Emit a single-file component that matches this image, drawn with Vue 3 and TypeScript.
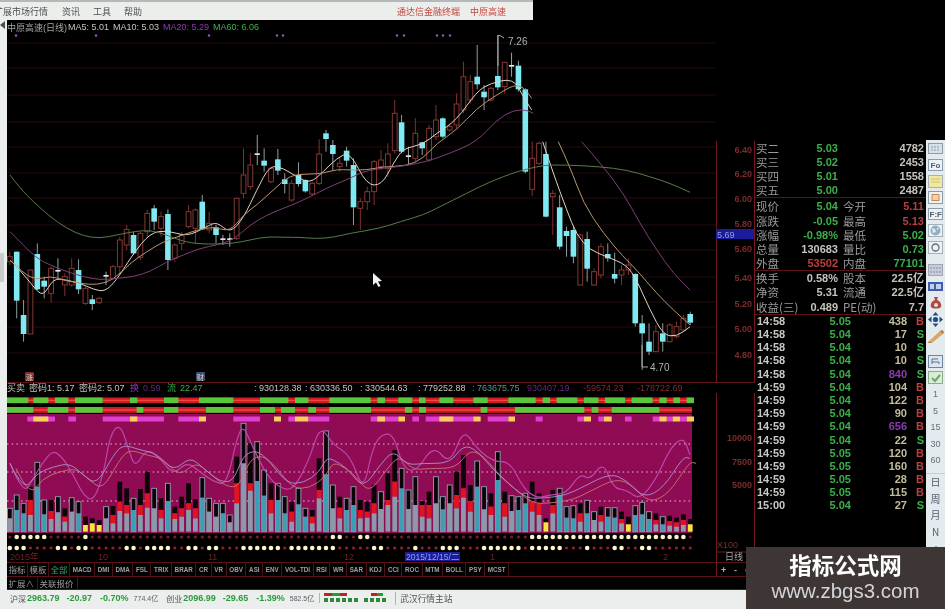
<script setup lang="ts">
type Pt = [number, number];
type Candle = [string, number, number, number, number];
type Bar = [string, number, number, number?];

const X0 = 16.7;
const STEP = 6.873;
const cx = (i: number) => X0 + STEP * i;

// values below were read off 3x crops, so they are in 1/3 px from a crop origin
const leftCandles: Candle[] = [
  ["r", 365, 380, 395, 405], ["c", 365, 365, 512, 565], ["c", 510, 555, 612, 635], ["r", 420, 420, 612, 612],
  ["c", 340, 372, 478, 480], ["c", 440, 452, 470, 505], ["r", 410, 415, 490, 518], ["w", 385, 420, 425, 445],
  ["r", 430, 440, 465, 498], ["r", 385, 415, 465, 470], ["c", 388, 420, 478, 492], ["r", 470, 475, 520, 525],
  ["c", 495, 508, 522, 540], ["r", 500, 505, 518, 522], ["w", 425, 435, 440, 465], ["r", 405, 410, 445, 450],
  ["r", 320, 330, 410, 430], ["r", 285, 298, 345, 360], ["c", 305, 315, 370, 375], ["r", 305, 310, 382, 390],
  ["r", 240, 250, 305, 320], ["c", 225, 235, 275, 300], ["r", 245, 260, 295, 320], ["c", 238, 252, 390, 420],
  ["r", 340, 345, 385, 395], ["r", 305, 315, 340, 360], ["r", 225, 245, 290, 295], ["r", 235, 240, 295, 340],
  ["c", 195, 215, 298, 300], ["r", 245, 280, 300, 310], ["c", 285, 292, 315, 340], ["w", 315, 325, 330, 345],
  ["w", 310, 325, 330, 350], ["r", 205, 205, 325, 330], ["r", 55, 135, 190, 205], ["r", 70, 105, 170, 180],
  ["w", 15, 70, 76, 105], ["c", 55, 92, 107, 125], ["r", 110, 115, 155, 160], ["c", 57, 88, 122, 135],
  ["c", 130, 148, 162, 190], ["r", 150, 160, 210, 215], ["c", 97, 135, 162, 170], ["c", 148, 150, 184, 188],
  ["r", 155, 160, 192, 195], ["r", 28, 72, 160, 165], ["c", 0, 10, 27, 65], ["c", 30, 45, 72, 120],
  ["r", 80, 100, 110, 125], ["c", 50, 62, 92, 110],
];
const rightCandles: Candle[] = [
  ["c", 385, 405, 532, 585], ["r", 505, 515, 535, 600], ["r", 470, 485, 515, 540], ["r", 390, 395, 485, 525],
  ["r", 360, 390, 410, 420], ["r", 340, 372, 415, 440], ["r", 210, 250, 362, 370], ["c", 255, 277, 365, 370],
  ["w", 350, 376, 382, 405], ["r", 265, 310, 385, 395], ["c", 335, 337, 355, 375], ["r", 285, 295, 390, 395],
  ["r", 225, 270, 320, 330], ["c", 262, 265, 320, 325], ["r", 285, 290, 300, 305], ["r", 190, 222, 285, 295],
  ["r", 95, 140, 240, 250], ["r", 135, 155, 210, 220], ["c", 45, 140, 163, 178], ["c", 165, 185, 202, 240],
  ["r", 170, 175, 210, 215], ["c", 15, 138, 172, 180], ["r", 95, 97, 170, 190], ["w", 68, 105, 108, 140],
  ["c", 92, 107, 178, 185], ["c", 175, 178, 425, 430], ["r", 335, 385, 478, 498], ["r", 335, 340, 400, 405],
  ["c", 335, 372, 560, 562], ["r", 480, 490, 500, 615], ["c", 495, 532, 650, 658], ["c", 590, 603, 618, 680],
  ["c", 590, 600, 680, 700], ["r", 610, 615, 765, 765], ["c", 605, 627, 716, 755], ["r", 715, 725, 765, 768],
  ["r", 640, 650, 735, 745], ["c", 640, 672, 685, 695], ["c", 668, 732, 746, 760], ["r", 705, 720, 735, 765],
  ["r", 685, 705, 720, 735], ["c", 730, 732, 880, 890], ["c", 855, 880, 910, 1020], ["c", 880, 935, 965, 975],
  ["r", 885, 905, 965, 965], ["c", 880, 910, 935, 965], ["r", 880, 885, 935, 938], ["r", 875, 890, 920, 925],
  ["r", 855, 865, 900, 905], ["c", 845, 852, 878, 885],
];

const candles = [
  ...leftCandles.map((c, n) => ({ type: c[0], x: cx(n - 1), h: 130 + c[1] / 3, t: 130 + c[2] / 3, b: 130 + c[3] / 3, l: 130 + c[4] / 3 })),
  ...rightCandles.map((c, n) => ({ type: c[0], x: cx(n + 49), h: 30 + c[1] / 3, t: 30 + c[2] / 3, b: 30 + c[3] / 3, l: 30 + c[4] / 3 })),
];

function smooth(pts: Pt[]): string {
  let d = `M${pts[0][0].toFixed(1)} ${pts[0][1].toFixed(1)}`;
  for (let i = 1; i < pts.length - 1; i++) {
    const mx = (pts[i][0] + pts[i + 1][0]) / 2;
    const my = (pts[i][1] + pts[i + 1][1]) / 2;
    d += `Q${pts[i][0].toFixed(1)} ${pts[i][1].toFixed(1)} ${mx.toFixed(1)} ${my.toFixed(1)}`;
  }
  const last = pts[pts.length - 1];
  return d + `L${last[0].toFixed(1)} ${last[1].toFixed(1)}`;
}

const mainL = (p: number[]): Pt => [p[0] / 3, 130 + p[1] / 3];
const mainR = (p: number[]): Pt => [350 + p[0] / 3, 30 + p[1] / 3];
const lowL = (p: number[]): Pt => [p[0] / 3, 375 + p[1] / 3];
const lowR = (p: number[]): Pt => [350 + p[0] / 3, 375 + p[1] / 3];

const maLines = [
  {
    color: "#ddd6c6",
    paths: [
      smooth([
        ...[[30, 390], [60, 420], [100, 470], [130, 500], [160, 445], [200, 450], [240, 460], [280, 478], [315, 485], [350, 450], [400, 370], [450, 310], [500, 300], [560, 320], [620, 290], [650, 275], [690, 310], [730, 265], [770, 180], [810, 105], [850, 115], [890, 140], [930, 160], [970, 125], [1010, 85], [1050, 65]].map(mainL),
        ...[[50, 465], [95, 465], [130, 400], [160, 355], [215, 345], [260, 310], [320, 270], [380, 185], [420, 160], [490, 145], [520, 200], [545, 240]].map(mainR),
      ]),
      smooth([[578, 335], [610, 430], [650, 540], [680, 615], [720, 660], [770, 680], [830, 705], [860, 750], [900, 840], [940, 915], [980, 920], [1020, 890]].map(mainR)),
    ],
  },
  {
    color: "#b89670",
    paths: [
      smooth([
        ...[[30, 390], [70, 430], [110, 450], [150, 438], [190, 450], [240, 460], [290, 465], [340, 450], [390, 400], [440, 365], [490, 335], [540, 318], [590, 300], [640, 290], [690, 305], [730, 255], [770, 225], [820, 180], [870, 135], [930, 132], [970, 130], [1010, 118], [1050, 120]].map(mainL),
        ...[[50, 420], [100, 410], [170, 408], [220, 385], [260, 340], [320, 300], [380, 235], [440, 195], [490, 165], [520, 170], [545, 205]].map(mainR),
      ]),
      smooth([[625, 335], [660, 410], [700, 520], [760, 610], [820, 680], [860, 720], [920, 790], [970, 840], [1020, 885]].map(mainR)),
    ],
  },
  {
    color: "#7c4078",
    paths: [
      smooth([
        ...[[30, 305], [60, 335], [110, 385], [150, 405], [200, 425], [250, 440], [300, 450], [350, 445], [400, 440], [450, 425], [500, 395], [550, 375], [600, 355], [650, 345], [700, 330], [750, 285], [800, 255], [850, 235], [900, 215], [950, 190], [1000, 165], [1050, 145]].map(mainL),
        ...[[50, 420], [150, 410], [230, 395], [300, 370], [380, 335], [440, 270], [490, 240], [530, 240], [550, 250]].map(mainR),
      ]),
      smooth([[695, 335], [760, 410], [820, 490], [870, 580], [920, 660], [970, 730], [1020, 780]].map(mainR)),
    ],
  },
  {
    color: "#587c48",
    paths: [
      smooth([
        ...[[30, 135], [60, 175], [100, 215], [150, 260], [200, 295], [250, 318], [300, 325], [350, 315], [400, 305], [450, 300], [500, 315], [550, 335], [600, 342], [650, 342], [700, 340], [750, 330], [800, 320], [850, 322], [900, 322], [950, 326], [1000, 322], [1050, 310]].map(mainL),
        ...[[90, 595], [150, 575], [220, 555], [270, 530], [350, 490], [420, 455], [500, 425], [530, 418], [580, 405], [650, 405], [750, 410], [830, 420], [900, 440], [960, 460], [1020, 487]].map(mainR),
      ]),
    ],
  },
];

const gridYs = [43, 68, 95, 122, 147, 173, 198, 225, 250, 277, 302, 327, 353];
const eventXs = [16, 96, 209, 277, 283, 397, 404, 437, 443, 450];
const priceTicks: [string, number][] = [
  ["6.40", 149], ["6.20", 173], ["6.00", 198], ["5.80", 223], ["5.60", 248],
  ["5.40", 277], ["5.20", 303], ["5.00", 328], ["4.80", 354],
];

// kinds: u = black, red, grey; d = outlined, black, teal; g = outlined, black, grey; y = black, yellow
const bars: Bar[] = [
  ["g", 400, 430], ["d", 360, 405], ["d", 385, 415], ["u", 335, 375, 420], ["d", 262, 335], ["d", 375, 418],
  ["u", 375, 408, 432], ["g", 365, 412], ["u", 400, 425, 440], ["g", 368, 410], ["d", 380, 415], ["y", 425, 450],
  ["y", 430, 445], ["y", 435, 450], ["g", 395, 430], ["u", 393, 420, 445], ["u", 320, 380, 408], ["u", 340, 390, 415],
  ["d", 370, 405], ["u", 342, 390, 420], ["u", 290, 355, 398], ["g", 340, 400], ["u", 370, 405, 430], ["d", 325, 378],
  ["u", 395, 415, 432], ["u", 365, 400, 425], ["u", 325, 385, 405], ["u", 372, 400, 430], ["d", 308, 368], ["g", 370, 410],
  ["g", 385, 425], ["d", 385, 415], ["g", 420, 442], ["u", 245, 325, 385], ["g", 145, 265], ["u", 205, 325, 347],
  ["d", 200, 318], ["d", 285, 362], ["u", 325, 375, 415], ["d", 325, 375], ["d", 365, 415], ["u", 380, 410, 440],
  ["d", 340, 388], ["d", 400, 425], ["u", 405, 425, 445], ["u", 250, 345, 370], ["d", 168, 298], ["g", 330, 400],
  ["u", 365, 398, 430], ["d", 370, 405], ["d", 335, 390], ["u", 375, 405, 430], ["u", 380, 410, 428], ["u", 330, 385, 415],
  ["g", 350, 402], ["u", 295, 375, 390], ["u", 225, 320, 365], ["d", 280, 340], ["g", 345, 402], ["g", 305, 390],
  ["u", 378, 390, 425], ["u", 350, 390, 430], ["g", 305, 385], ["d", 365, 403], ["g", 330, 385], ["u", 290, 360, 400],
  ["u", 240, 340, 368], ["u", 330, 378, 410], ["d", 258, 335], ["g", 335, 403], ["u", 355, 395, 420], ["d", 230, 315],
  ["u", 350, 385, 425], ["g", 362, 408], ["d", 365, 405], ["d", 355, 385], ["u", 320, 380, 410], ["u", 355, 385, 420],
  ["y", 430, 442], ["u", 345, 390, 415], ["d", 340, 360], ["d", 395, 428], ["d", 392, 430], ["u", 385, 415, 440],
  ["d", 376, 415], ["g", 410, 435], ["u", 395, 420, 440], ["d", 398, 425], ["d", 398, 428], ["u", 410, 432, 445],
  ["y", 425, 448], ["d", 392, 420], ["d", 382, 418], ["d", 410, 432], ["u", 415, 435, 448], ["d", 425, 448],
  ["u", 422, 438, 452], ["u", 428, 442, 455], ["u", 418, 435, 450], ["y", 432, 448],
];

const BAR_BASE = 470;
const barY = (z: number) => 375 + z / 3;
const barBlocks: { x: number; y: number; h: number; fill: string }[] = [];
const barOutlines: { x: number; y: number; h: number }[] = [];
bars.forEach(([kind, a, b, c], n) => {
  const x = cx(n - 1) - 2.4;
  const seg = (from: number, to: number, fill: string) =>
    barBlocks.push({ x, y: barY(from), h: (to - from) / 3, fill });
  seg(a, b, "#0c0406");
  if (kind === "u") {
    seg(b, c as number, "#e0141c");
    seg(c as number, BAR_BASE, "#8d99aa");
  } else if (kind === "d") {
    seg(b, BAR_BASE, "#3a9fb4");
  } else if (kind === "g") {
    seg(b, BAR_BASE, "#8d99aa");
  } else {
    seg(b, BAR_BASE, "#f5e63a");
  }
  if (kind === "d" || kind === "g") barOutlines.push({ x, y: barY(a), h: (BAR_BASE - a) / 3 });
});

const seg5 = ([a, b]: number[]) => ({ x: a / 3, w: (b - a) / 3 });
const seg6 = ([a, b]: number[]) => ({ x: 350 + a / 3, w: (b - a) / 3 });
const row1 = [
  ...[[20, 85], [100, 145], [165, 205], [225, 308], [390, 412], [492, 535], [597, 700], [780, 865], [885, 925], [988, 1050]].map(seg5),
  ...[[0, 62], [82, 105], [145, 187], [207, 227], [268, 310], [370, 413], [475, 557], [578, 600], [620, 682], [702, 745], [765, 825], [845, 908], [928, 950], [970, 990], [1010, 1032]].map(seg6),
];
const row2 = [
  ...[[20, 100], [143, 205], [225, 308], [410, 430], [492, 535], [618, 700], [780, 825], [843, 885], [925, 948], [988, 1050]].map(seg5),
  ...[[0, 63], [165, 187], [207, 228], [392, 412], [495, 703], [725, 745], [785, 928]].map(seg6),
];
const pinks = [
  ...[[82, 165], [205, 228], [308, 492], [535, 597], [700, 780], [865, 885], [925, 988]].map(seg5),
  ...[[62, 145], [187, 207], [227, 370], [413, 475], [557, 578], [682, 702], [745, 762], [825, 845], [908, 928], [950, 968], [990, 1010]].map(seg6),
];
const yellows = [
  ...[[100, 145], [390, 412], [597, 618], [822, 843], [885, 925]].map(seg5),
  ...[[82, 105], [145, 165], [268, 310], [370, 392], [475, 495], [702, 723], [762, 785], [928, 950], [968, 990], [1010, 1032]].map(seg6),
];

const pinkLine = smooth([
  ...[[30, 265], [70, 360], [100, 310], [130, 260], [160, 225], [190, 250], [220, 300], [250, 360], [280, 380], [310, 300], [330, 180], [360, 145], [385, 220], [405, 280], [440, 220], [480, 250], [520, 300], [560, 260], [600, 290], [640, 320], [680, 330], [710, 190], [730, 150], [760, 220], [800, 300], [840, 340], [880, 345], [930, 250], [960, 150], [1000, 210], [1050, 240]].map(lowL),
  ...[[40, 350], [65, 230], [90, 180], [130, 175], [160, 280], [200, 290], [250, 210], [300, 270], [340, 160], [380, 220], [430, 260], [480, 260], [520, 340], [560, 370], [600, 360], [650, 355], [690, 295], [720, 315], [760, 260], [790, 340], [830, 345], [870, 375], [920, 310], [960, 220], [1000, 185], [1020, 240]].map(lowR),
]);
const blueLine = smooth([
  ...[[30, 265], [70, 350], [110, 295], [160, 275], [210, 265], [250, 300], [290, 330], [340, 240], [370, 208], [420, 225], [470, 235], [520, 290], [570, 245], [610, 280], [660, 320], [700, 320], [730, 240], [770, 225], [810, 260], [860, 325], [910, 325], [960, 290], [980, 245], [1020, 265], [1050, 290]].map(lowL),
  ...[[40, 340], [90, 270], [130, 225], [170, 270], [220, 265], [300, 265], [340, 210], [380, 225], [430, 285], [480, 330], [530, 370], [580, 370], [650, 360], [700, 335], [780, 295], [830, 315], [880, 370], [940, 340], [1000, 245], [1020, 250]].map(lowR),
]);

const rowAWhite = new Set([0, 1, 2, 3, 4, 10, 46, 47, 50, 51]);
const rowBWhite = new Set([-1, 0, 1, 6, 7, 9, 10, 16, 17, 19, 20, 21, 22, 25, 26, 28, 29, 33, 34, 35, 36, 37, 38, 40, 41, 42, 43, 44, 45, 46, 52, 53, 58, 62, 63, 64, 68, 69, 70, 71, 72, 73, 75, 76, 77, 78, 79, 83, 87, 88, 91, 92]);
const dotIdx = Array.from({ length: 100 }, (_, n) => n - 1);
const isRowAWhite = (i: number) => rowAWhite.has(i) || (i >= 75 && i <= 97);

const dateLabels: [string, number][] = [["2015年", 10], ["10", 98], ["11", 208], ["12", 344], ["1", 490], ["2", 663]];
const indicatorTicks: [string, number][] = [["10000", 441], ["7500", 465], ["5000", 488]];

const book = [
  ["买二", "5.03", "4782"],
  ["买三", "5.02", "2453"],
  ["买四", "5.01", "1558"],
  ["买五", "5.00", "2487"],
];
const stats = [
  ["现价", "5.04", "green", "今开", "5.11", "red"],
  ["涨跌", "-0.05", "green", "最高", "5.13", "red"],
  ["涨幅", "-0.98%", "green", "最低", "5.02", "green"],
  ["总量", "130683", "pale", "量比", "0.73", "green"],
  ["外盘", "53502", "red", "内盘", "77101", "green"],
];
const finance = [
  ["换手", "0.58%", "pale", "股本", "22.5亿", "pale"],
  ["净资", "5.31", "pale", "流通", "22.5亿", "pale"],
  ["收益(三)", "0.489", "pale", "PE(动)", "7.7", "pale"],
];
const ticks = [
  ["14:58", "5.05", "438", "B", ""],
  ["14:58", "5.04", "17", "S", ""],
  ["14:58", "5.04", "10", "S", ""],
  ["14:58", "5.04", "10", "S", ""],
  ["14:58", "5.04", "840", "S", "big"],
  ["14:59", "5.04", "104", "B", ""],
  ["14:59", "5.04", "122", "B", ""],
  ["14:59", "5.04", "90", "B", ""],
  ["14:59", "5.04", "656", "B", "big"],
  ["14:59", "5.04", "22", "S", ""],
  ["14:59", "5.05", "120", "B", ""],
  ["14:59", "5.05", "160", "B", ""],
  ["14:59", "5.05", "28", "B", ""],
  ["14:59", "5.05", "115", "B", ""],
  ["15:00", "5.04", "27", "S", ""],
];
const tabs = ["MACD", "DMI", "DMA", "FSL", "TRIX", "BRAR", "CR", "VR", "OBV", "ASI", "ENV", "VOL-TDI", "RSI", "WR", "SAR", "KDJ", "CCI", "ROC", "MTM", "BOLL", "PSY", "MCST"];
const periods = ["1", "5", "15", "30", "60"];
const spans = ["日", "周", "月", "N"];
</script>

<template>
  <div class="app">
    <header class="menu">
      <span class="menu-item first">扩展市场行情</span>
      <span class="menu-item">资讯</span>
      <span class="menu-item">工具</span>
      <span class="menu-item">帮助</span>
      <span class="menu-brand">通达信金融终端</span>
      <span class="menu-brand">中原高速</span>
    </header>

    <div class="workspace">
      <div class="left-strip">
        <svg width="6" height="8" viewBox="0 0 6 8"><path d="M5 0v8L0 4z" fill="#4a4e52" /></svg>
        <i class="notch"></i>
      </div>

      <section class="chart-area">
        <div class="legend">
          <span class="title">中原高速(日线)</span>
          <span class="pale">MA5: 5.01</span>
          <span class="pale">MA10: 5.03</span>
          <span class="purple">MA20: 5.29</span>
          <span class="green">MA60: 6.06</span>
        </div>

        <svg class="main-chart" width="748" height="349" viewBox="7 34 748 349">
          <line v-for="y in gridYs" :key="y" x1="7" x2="716" :y1="y" :y2="y" stroke="#26080a" />
          <circle v-for="x in eventXs" :key="x" :cx="x" cy="35.5" r="1.2" fill="#9c50c4" />
          <line x1="716.5" x2="716.5" y1="141" y2="383" stroke="#6e1a1e" />
          <line x1="754.5" x2="754.5" y1="141" y2="383" stroke="#6e1a1e" />
          <line x1="7" x2="755" y1="382.5" y2="382.5" stroke="#5c1216" />

          <g v-for="(c, n) in candles" :key="n">
            <template v-if="c.type === 'c'">
              <line :x1="c.x" :x2="c.x" :y1="c.h" :y2="c.l" stroke="#8f9ba0" />
              <rect :x="c.x - 2.8" :y="c.t" width="5.6" :height="c.b - c.t" fill="#7feaf2" />
            </template>
            <template v-else-if="c.type === 'r'">
              <line :x1="c.x" :x2="c.x" :y1="c.h" :y2="c.t" stroke="#7e322e" />
              <line :x1="c.x" :x2="c.x" :y1="c.b" :y2="c.l" stroke="#7e322e" />
              <rect :x="c.x - 2.4" :y="c.t" width="4.8" :height="c.b - c.t" fill="#000" stroke="#853832" />
            </template>
            <template v-else>
              <line :x1="c.x" :x2="c.x" :y1="c.h" :y2="c.l" stroke="#9aa0a0" />
              <rect :x="c.x - 2.6" :y="c.t" width="5.2" height="1.6" fill="#eef" />
            </template>
          </g>

          <template v-for="ma in maLines" :key="ma.color">
            <path v-for="d in ma.paths" :key="d" :d="d" fill="none" :stroke="ma.color" />
          </template>

          <path d="M498 66V35.5H500L504 38" fill="none" stroke="#aaa" />
          <text x="508" y="44.5" class="note">7.26</text>
          <path d="M642 345V367H648" fill="none" stroke="#aaa" />
          <text x="650" y="370.5" class="note">4.70</text>

          <polygon points="373,273 373,285 376,282.5 378.5,287 380.5,286 378,281.5 382,281" fill="#f2f2f2" />

          <text v-for="t in priceTicks" :key="t[0]" x="752" :y="t[1] + 3.5" class="axis">{{ t[0] }}</text>
          <rect x="716" y="229" width="38" height="10" fill="#1b1b9c" />
          <text x="717" y="237.5" class="axis-box">5.69</text>

          <rect x="25" y="372" width="9" height="9" rx="1" fill="#7a2f2c" />
          <text x="26" y="380" class="badge">涨</text>
          <rect x="196" y="372" width="9" height="9" rx="1" fill="#3d4f6e" />
          <text x="197" y="380" class="badge">财</text>
        </svg>

        <div class="ind-legend">
          <span class="pale">买卖</span>
          <span class="pale">密码1: 5.17</span>
          <span class="pale">密码2: 5.07</span>
          <span class="purple">换</span>
          <span class="purple dim">0.59</span>
          <span class="green">流</span>
          <span class="green">22.47</span>
          <span class="pale">: 930128.38</span>
          <span class="pale">: 630336.50</span>
          <span class="pale">: 330544.63</span>
          <span class="pale">: 779252.88</span>
          <span class="teal">: 763675.75</span>
          <span class="purple dim">930407.19</span>
          <span class="red dim">-59574.23</span>
          <span class="red dim">-178722.69</span>
        </div>

        <svg class="ind-chart" width="748" height="170" viewBox="7 393 748 170">
          <rect x="7" y="397.5" width="685" height="5.6" fill="#d01828" />
          <rect x="7" y="407" width="685" height="5.8" fill="#d01828" />
          <rect x="7" y="399.7" width="685" height="1.4" fill="#f0483a" />
          <rect x="7" y="409.3" width="685" height="1.4" fill="#f0483a" />
          <rect v-for="s in row1" :key="s.x" :x="s.x" y="397.5" :width="s.w" height="5.6" fill="#58c83a" />
          <rect v-for="s in row2" :key="s.x" :x="s.x" y="407" :width="s.w" height="5.8" fill="#58c83a" />

          <rect x="7" y="414" width="685" height="119" fill="#8f0b54" />
          <rect v-for="s in pinks" :key="s.x" :x="s.x" y="416.5" :width="s.w" height="5" fill="#e23cd0" />
          <rect v-for="s in yellows" :key="s.x" :x="s.x" y="416.5" :width="s.w" height="5" fill="#f7cf5a" />

          <line v-for="y in [444, 472, 501]" :key="y" x1="7" x2="692" :y1="y" :y2="y" stroke="#e8c0d8" stroke-width="1.2" stroke-dasharray="1.5 3.2" />

          <rect v-for="(r, n) in barBlocks" :key="n" :x="r.x" :y="r.y" width="4.8" :height="r.h" :fill="r.fill" />
          <rect v-for="(o, n) in barOutlines" :key="n" :x="o.x" :y="o.y" width="4.8" :height="o.h" fill="none" stroke="#8a96a6" />

          <path :d="pinkLine" fill="none" stroke="#bc48a8" stroke-width="1.2" />
          <path :d="blueLine" fill="none" stroke="#c07a70" stroke-width="0.9" transform="translate(6 5)" />
          <path :d="blueLine" fill="none" stroke="#a894d0" stroke-width="0.9" />

          <circle v-for="i in dotIdx" :key="i" :cx="cx(i)" cy="537" :r="isRowAWhite(i) ? 2.3 : 1.6" :fill="isRowAWhite(i) ? '#fbf4c8' : '#7c1c2a'" />
          <circle v-for="i in dotIdx" :key="i" :cx="cx(i)" cy="548" :r="rowBWhite.has(i) ? 2.3 : 1.6" :fill="rowBWhite.has(i) ? '#fbf4c8' : '#9a1c2c'" />

          <line x1="716.5" x2="716.5" y1="393" y2="563" stroke="#6e1a1e" />
          <line x1="754.5" x2="754.5" y1="393" y2="563" stroke="#6e1a1e" />
          <line x1="716" x2="755" y1="552" y2="552" stroke="#6e1a1e" />
          <line x1="7" x2="755" y1="562.5" y2="562.5" stroke="#5c1216" />
          <text v-for="t in indicatorTicks" :key="t[0]" x="752" :y="t[1]" class="axis">{{ t[0] }}</text>
          <text x="717" y="548" class="axis-x100">X100</text>
          <text x="725" y="560" class="period">日线</text>

          <text v-for="d in dateLabels" :key="d[0]" :x="d[1]" y="560" class="date">{{ d[0] }}</text>
          <rect x="405" y="552" width="55" height="9" fill="#1b1b9c" />
          <text x="406" y="560" class="date-box">2015/12/15/二</text>
        </svg>

        <div class="tab-row">
          <span class="tab cjk">指标</span>
          <span class="tab cjk">模板</span>
          <span class="tab cjk active">全部</span>
          <span v-for="t in tabs" :key="t" class="tab">{{ t }}</span>
          <div class="zoom-cell">
            <span>+</span>
            <span>-</span>
            <span>○</span>
          </div>
        </div>
        <div class="tab-row second">
          <span class="tab cjk">扩展∧</span>
          <span class="tab cjk">关联报价</span>
        </div>
      </section>

      <aside class="quote">
        <div class="block book">
          <div v-for="r in book" :key="r[0]" class="row">
            <span class="lbl">{{ r[0] }}</span>
            <span class="num green">{{ r[1] }}</span>
            <span></span>
            <span class="num pale">{{ r[2] }}</span>
          </div>
        </div>
        <div class="block stats">
          <div v-for="r in stats" :key="r[0]" class="row">
            <span class="lbl">{{ r[0] }}</span>
            <span class="num" :class="r[2]">{{ r[1] }}</span>
            <span class="lbl">{{ r[3] }}</span>
            <span class="num" :class="r[5]">{{ r[4] }}</span>
          </div>
        </div>
        <div class="block">
          <div v-for="r in finance" :key="r[0]" class="row">
            <span class="lbl">{{ r[0] }}</span>
            <span class="num" :class="r[2]">{{ r[1] }}</span>
            <span class="lbl">{{ r[3] }}</span>
            <span class="num" :class="r[5]">{{ r[4] }}</span>
          </div>
        </div>
        <div class="ticks">
          <div v-for="(t, n) in ticks" :key="n" class="tick">
            <span class="time">{{ t[0] }}</span>
            <span class="num green">{{ t[1] }}</span>
            <span class="num" :class="t[4] === 'big' ? 'purple' : 'tan'">{{ t[2] }}</span>
            <span class="side" :class="t[3] === 'B' ? 'red' : 'green'">{{ t[3] }}</span>
          </div>
        </div>
      </aside>

      <nav class="toolbar">
        <div class="tool"><svg width="15" height="11" viewBox="0 0 15 11"><rect x=".5" y=".5" width="14" height="10" fill="#d8dfe6" stroke="#8d9cab" /><path d="M3 4h9M3 7h9" stroke="#8d9cab" stroke-dasharray="2 1" /></svg></div>
        <div class="tool"><svg width="15" height="12" viewBox="0 0 15 12"><rect x=".5" y=".5" width="14" height="11" fill="#eef2f5" stroke="#8d9cab" /><text x="2.5" y="9" class="tool-text">Fo</text></svg></div>
        <div class="tool"><svg width="15" height="13" viewBox="0 0 15 13"><rect x=".5" y=".5" width="14" height="12" fill="#f1e8a4" stroke="#a6b0b8" /><path d="M3 4h9M3 7h9" stroke="#cdbf6c" /></svg></div>
        <div class="tool"><svg width="15" height="13" viewBox="0 0 15 13"><rect x=".5" y=".5" width="14" height="12" fill="#eef2f5" stroke="#8d9cab" /><rect x="4" y="3.5" width="7" height="6" fill="#f2d2a8" stroke="#c78a55" /></svg></div>
        <div class="tool"><svg width="15" height="12" viewBox="0 0 15 12"><rect x=".5" y=".5" width="14" height="11" fill="#eef2f5" stroke="#8d9cab" /><text x="1.5" y="9" class="tool-text">F:F</text></svg></div>
        <div class="tool"><svg width="15" height="13" viewBox="0 0 15 13"><rect x=".5" y=".5" width="14" height="12" fill="#eef2f5" stroke="#a6b0b8" /><circle cx="7.5" cy="6.5" r="5" fill="#8fb0c4" /><path d="M4 4l3 1 1 3-3 1zM9 3l2 2-2 1z" fill="#e2ecf0" /></svg></div>
        <div class="tool"><svg width="15" height="13" viewBox="0 0 15 13"><rect x=".5" y=".5" width="14" height="12" fill="#eef2f5" stroke="#a6b0b8" /><circle cx="7.5" cy="6.5" r="3.5" fill="none" stroke="#5d6e7c" stroke-width="1.3" /></svg></div>
        <div class="tool gap"><svg width="15" height="12" viewBox="0 0 15 12"><rect x=".5" y=".5" width="14" height="11" fill="#c8ccd8" stroke="#a0a6b8" /><path d="M2 4h11M2 8h11" stroke="#8a8aa0" stroke-dasharray="2 1" /></svg></div>
        <div class="tool"><svg width="15" height="9" viewBox="0 0 15 9"><rect width="15" height="9" fill="#3f5db0" /><rect x="2" y="2" width="4" height="5" fill="#c4cfe8" /><rect x="8" y="2" width="5" height="5" fill="#c4cfe8" /></svg></div>
        <div class="tool"><svg width="12" height="14" viewBox="0 0 12 14"><path d="M4 1h4L7 4c3 1 5 4 4 7-1 2-9 2-10 0C0 8 2 5 5 4z" fill="#b04a40" /><circle cx="6" cy="9" r="2" fill="#ecd8c8" /></svg></div>
        <div class="tool"><svg width="15" height="15" viewBox="0 0 15 15"><path d="M7.5 0l3 3.5h-6zM7.5 15l-3-3.5h6zM0 7.5l3.5-3v6zM15 7.5l-3.5 3v-6z" fill="#1d4f86" /><circle cx="7.5" cy="7.5" r="2.6" fill="#1d4f86" /></svg></div>
        <div class="tool"><svg width="16" height="14" viewBox="0 0 16 14"><path d="M1 12L12 2l3 3L4 14z" fill="#d9a768" /><path d="M12 2l3 3 1-2-2-2zM1 12l3 2H0z" fill="#a87740" /></svg></div>
        <div class="tool gap-big"><svg width="15" height="13" viewBox="0 0 15 13"><rect x=".5" y=".5" width="14" height="12" fill="#dde6ee" stroke="#6e87a0" /><path d="M4 9V4h6M4 7h7v2" fill="none" stroke="#5d7288" /></svg></div>
        <div class="tool"><svg width="15" height="13" viewBox="0 0 15 13"><rect x=".5" y=".5" width="14" height="12" fill="#d8ecd8" stroke="#8ab08a" /><path d="M4 7l3 3 5-6" fill="none" stroke="#6ba86b" stroke-width="2" /></svg></div>
        <div v-for="p in periods" :key="p" class="tool label">{{ p }}</div>
        <div v-for="(s, n) in spans" :key="s" class="tool cjk-label" :class="{ rule: n === 0 }">{{ s }}</div>
        <div class="tool"><svg width="12" height="4" viewBox="0 0 12 4"><path d="M1 4l5-4 5 4z" fill="#6b7480" /></svg></div>
      </nav>
    </div>

    <footer class="status">
      <span class="st-lbl">沪深</span>
      <span class="st-num idx">2963.79</span>
      <span class="st-num d1">-20.97</span>
      <span class="st-num d2">-0.70%</span>
      <span class="st-vol">774.4亿</span>
      <span class="st-lbl second-idx">创业</span>
      <span class="st-num idx">2096.99</span>
      <span class="st-num d1">-29.65</span>
      <span class="st-num d2">-1.39%</span>
      <span class="st-vol">582.5亿</span>
      <svg class="st-bars" width="64" height="10" viewBox="0 0 64 10">
        <rect x="0" y="0" width="8" height="3" fill="#c02020" />
        <rect x="8" y="0" width="8" height="3" fill="#20a030" />
        <rect x="16" y="0" width="7" height="3" fill="#c02020" />
        <rect x="47" y="0" width="6" height="3" fill="#c02020" />
        <rect x="53" y="0" width="6" height="3" fill="#20a030" />
        <rect v-for="x in [0, 6, 12, 18, 24, 30, 40, 46, 52, 58]" :key="x" :x="x" y="5" width="4" height="4" fill="#2a8a3a" />
      </svg>
      <span class="st-lbl station">武汉行情主站</span>
    </footer>

    <div class="watermark">
      <strong>指标公式网</strong>
      <span>www.zbgs3.com</span>
    </div>
  </div>
</template>

<style scoped>
.app {
  position: relative;
  width: 945px;
  height: 609px;
  overflow: hidden;
  background: #000;
  font-family: "Liberation Sans", "Noto Sans CJK SC", sans-serif;
  filter: blur(0.4px);
}

.menu {
  display: flex;
  align-items: center;
  width: 533px;
  height: 20px;
  background: #eceeec;
  border-top: 2px solid #b4b8b8;
  box-sizing: border-box;
  font-family: "Noto Sans CJK SC", sans-serif;
  font-size: 9px;
  color: #4c5050;
}

.menu-item {
  margin-right: 13px;
}

.menu-item.first {
  margin-left: -6px;
  margin-right: 14px;
}

.menu-brand {
  color: #c4453c;
  margin-right: 10px;
}

.menu-brand:nth-of-type(5) {
  margin-left: auto;
}

.menu-brand:last-child {
  margin-right: 27px;
}

.workspace {
  display: flex;
  height: 570px;
}

.left-strip {
  width: 7px;
  padding-top: 1px;
  background: #eceeee;
  box-sizing: border-box;
}

.left-strip svg {
  display: block;
}

.notch {
  display: block;
  width: 4px;
  height: 29px;
  margin-top: 224px;
  background: #c8cccc;
}

.chart-area {
  display: flex;
  flex-direction: column;
  width: 748px;
}

.legend {
  display: flex;
  gap: 4px;
  height: 14px;
  align-items: center;
  font-size: 9px;
  white-space: nowrap;
}

.legend .title {
  margin-right: -3px;
  color: #a4a4a0;
}

.main-chart,
.ind-chart {
  display: block;
}

.ind-legend {
  display: grid;
  grid-template-columns: 22px 50px 51px 13px 24px 13px 74px 51px 55px 58px 54px 55px 56px 54px 60px;
  height: 10px;
  line-height: 10px;
  font-size: 9px;
  white-space: nowrap;
}

.pale {
  color: #c4c4bc;
}

.green {
  color: #3bb04a;
}

.red {
  color: #b8403e;
}

.purple {
  color: #8a3ab0;
}

.teal {
  color: #4aa088;
}

.tan {
  color: #c4bc9c;
}

.dim {
  opacity: 0.7;
}

.note {
  font-size: 10px;
  fill: #b4b4b0;
}

.axis {
  font-size: 9px;
  font-weight: 700;
  text-anchor: end;
  fill: #7c2c2c;
}

.axis-box {
  font-size: 9px;
  fill: #8ca0d8;
}

.axis-x100 {
  font-size: 9px;
  fill: #7c2c2c;
}

.period {
  font-size: 9px;
  fill: #a8a8a8;
  font-family: "Noto Sans CJK SC", sans-serif;
}

.badge {
  font-size: 7px;
  fill: #e0d0c8;
  font-family: "Noto Sans CJK SC", sans-serif;
}

.date {
  font-size: 9px;
  fill: #6e2222;
}

.date-box {
  font-size: 8.5px;
  fill: #8ca6e8;
}

.tab-row {
  display: flex;
  align-items: center;
  height: 14px;
  padding-left: 0;
  border-bottom: 1px solid #5c1216;
  box-sizing: border-box;
  font-size: 6.3px;
  font-weight: 700;
  color: #a0a0a0;
}

.tab-row.second {
  height: 13px;
}

.tab {
  padding: 0 2.6px;
  line-height: 13px;
  border-right: 1px solid #4c1216;
  white-space: nowrap;
}

.tab.cjk {
  padding: 0 1.5px;
  font-family: "Noto Sans CJK SC", sans-serif;
  font-size: 8.5px;
  font-weight: 400;
  color: #9c9c9c;
}

.second .tab.cjk {
  padding: 0 3px 0 1.5px;
}

.tab.active {
  color: #3aa868;
}

.zoom-cell {
  display: flex;
  justify-content: space-around;
  align-items: center;
  width: 39px;
  height: 100%;
  margin-left: auto;
  border-left: 1px solid #6e1a1e;
  border-right: 1px solid #6e1a1e;
  box-sizing: border-box;
  color: #b0b0b0;
  font-size: 9px;
}

.quote {
  width: 171px;
  font-size: 11px;
}

.block {
  border-bottom: 1px solid #5c1216;
}

.book {
  margin-top: 120.6px;
}

.stats {
  padding-top: 1px;
}

.row {
  display: grid;
  grid-template-columns: 30px 52px 34px 52px;
  height: 14.2px;
  line-height: 14.2px;
  padding-left: 1px;
  white-space: nowrap;
}

.lbl {
  font-family: "Noto Sans CJK SC", sans-serif;
  font-size: 11.5px;
  color: #9a9a9a;
}

.row .lbl:nth-child(3) {
  padding-left: 5px;
}

.num {
  font-weight: 700;
  text-align: right;
}

.tick {
  display: grid;
  grid-template-columns: 42px 52px 56px 17px;
  height: 13.2px;
  line-height: 13.2px;
  padding-left: 2px;
}

.time {
  font-weight: 700;
  color: #c8c8c4;
}

.side {
  font-weight: 700;
  text-align: right;
}

.toolbar {
  display: flex;
  flex-direction: column;
  width: 19px;
  height: 410px;
  margin-top: 120px;
  background: #e4ebef;
}

.tool {
  display: flex;
  flex: none;
  align-items: center;
  justify-content: center;
  height: 16.5px;
}

.tool.gap {
  margin-top: 6.5px;
}

.tool.gap-big {
  margin-top: 8.5px;
}

.tool.label {
  font-size: 9px;
  color: #64707c;
}

.tool.cjk-label {
  font-family: "Noto Sans CJK SC", sans-serif;
  font-size: 10px;
  color: #55606c;
}

.tool.rule {
  margin-top: 4px;
  border-top: 1px solid #c8ccd0;
}

.tool-text {
  font-size: 8px;
  font-weight: 700;
  fill: #50606e;
}

.status {
  display: flex;
  align-items: center;
  height: 19px;
  padding: 0 0 3px 10px;
  background: #eceeee;
  box-sizing: border-box;
  white-space: nowrap;
}

.st-lbl {
  font-family: "Noto Sans CJK SC", sans-serif;
  font-size: 8px;
  color: #505050;
}

.st-num {
  font-size: 9px;
  font-weight: 700;
  color: #2c9a3a;
}

.st-num.idx {
  margin-left: 1px;
}

.st-num.d1 {
  margin-left: 7px;
}

.st-num.d2 {
  margin-left: 8px;
}

.st-vol {
  margin-left: 5px;
  font-size: 7px;
  color: #5a6068;
}

.second-idx {
  margin-left: 8px;
}

.st-bars {
  margin-left: 5px;
  padding-left: 4px;
  border-left: 1px solid #b0b4b4;
}

.station {
  margin-left: 7px;
  padding-left: 4px;
  border-left: 1px solid #b0b4b4;
  font-size: 8.7px;
}

.watermark {
  position: absolute;
  right: 0;
  bottom: 0;
  display: flex;
  flex-direction: column;
  align-items: center;
  width: 199px;
  height: 62px;
  background: #3e3634;
  color: #fff;
}

.watermark strong {
  margin-top: 2px;
  font-family: "Noto Sans CJK SC", sans-serif;
  font-size: 22.5px;
  line-height: 30px;
  font-weight: 700;
}

.watermark span {
  font-size: 20.5px;
  line-height: 24px;
  color: #d4d4d8;
}
</style>

<style>
html,
body {
  margin: 0;
  background: #000;
  overflow: hidden;
}
</style>
